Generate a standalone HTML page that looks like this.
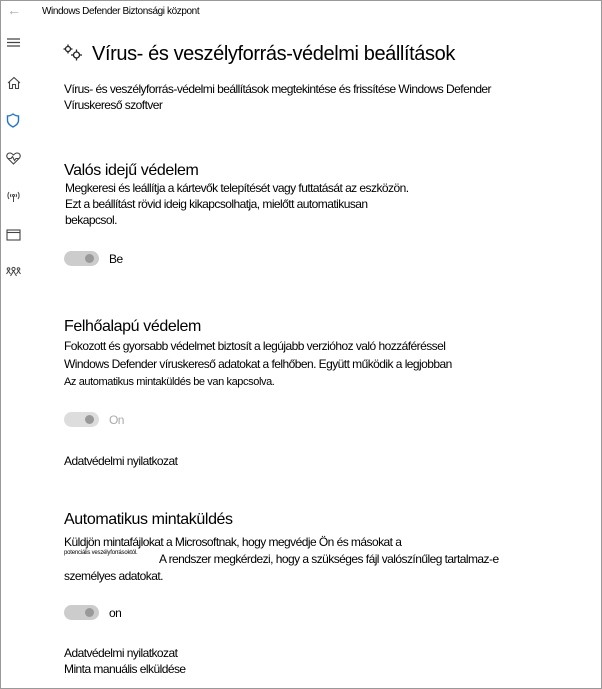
<!DOCTYPE html>
<html><head><meta charset="utf-8"><style>
*{margin:0;padding:0;box-sizing:border-box}
body{width:602px;height:689px;background:#fff;font-family:"Liberation Sans",sans-serif;color:#000;position:relative;overflow:hidden;border:1px solid #999}
.a{position:absolute;white-space:nowrap}
.t{font-size:12px;letter-spacing:-0.55px}
.h{font-size:16px;letter-spacing:-0.4px}
.tg{position:absolute;width:35px;height:15px;border-radius:8px;background:#ccc}
.tg:after{content:"";position:absolute;right:5px;top:3px;width:9px;height:9px;border-radius:50%;background:#999}
svg{position:absolute}
</style></head><body>
<div class="a" style="left:6px;top:1px;font-size:14px;color:#aaa">←</div>
<div class="a" style="left:41px;top:5px;font-size:10px;letter-spacing:-0.4px">Windows Defender Biztonsági központ</div>
<svg style="left:6px;top:37px" width="14" height="10"><path d="M0 1h13M0 4.5h13M0 8h13" stroke="#444" stroke-width="1.2"/></svg>
<svg style="left:6px;top:75px" width="14" height="14" fill="none" stroke="#444" stroke-width="1.1"><path d="M1 7L7 1.5 13 7M2.5 5.5V12.5H5.5V8.5H8.5V12.5H11.5V5.5"/></svg>
<svg style="left:5px;top:112px" width="14" height="15" fill="none" stroke="#1e73d0" stroke-width="1.4"><path d="M7 1C5 2.5 3 3 1.5 3V7.5C1.5 10.5 4 12.5 7 14 10 12.5 12.5 10.5 12.5 7.5V3C11 3 9 2.5 7 1Z"/></svg>
<svg style="left:5px;top:151px" width="15" height="13" fill="none" stroke="#444" stroke-width="1.1"><path d="M7.5 12L1.5 6C0 4 1 1 4 1 5.5 1 7 2.5 7.5 3 8 2.5 9.5 1 11 1 14 1 15 4 13.5 6Z M2 6.5H5L6.5 4.5 8.5 8.5 10 6.5H13"/></svg>
<svg style="left:5px;top:189px" width="15" height="13" fill="none" stroke="#444" stroke-width="1"><path d="M7.5 6V12M3 2C1.5 4 1.5 7 3 9M12 2C13.5 4 13.5 7 12 9M5 4C4.3 5 4.3 6 5 7M10 4C10.7 5 10.7 6 10 7"/><circle cx="7.5" cy="5.5" r="1"/></svg>
<svg style="left:5px;top:228px" width="15" height="12" fill="none" stroke="#444" stroke-width="1.1"><rect x="1" y="1" width="13" height="10"/><path d="M1 3.5H14"/></svg>
<svg style="left:5px;top:265px" width="15" height="12" fill="none" stroke="#444" stroke-width="1"><circle cx="7.5" cy="3" r="1.6"/><circle cx="2.5" cy="3" r="1.3"/><circle cx="12.5" cy="3" r="1.3"/><path d="M4.5 10L7.5 5 10.5 10M0.5 8L2.5 5 4.5 8M10.5 8L12.5 5 14.5 8"/></svg>
<svg style="left:62px;top:43px" width="20" height="17" fill="none" stroke="#222" stroke-width="1.3"><circle cx="5" cy="5" r="2.5"/><circle cx="13.5" cy="11" r="3"/><path d="M5 0.5V2M5 8V9.5M0.5 5H2M8 5H9.5M13.5 5.5V7.5M13.5 14.5V16.5M8 11H10M17 11H19"/></svg>
<div class="a" style="left:91px;top:42px;font-size:20px;letter-spacing:-0.4px">Vírus- és veszélyforrás-védelmi beállítások</div>
<div class="a t" style="left:63px;top:81px">Vírus- és veszélyforrás-védelmi beállítások megtekintése és frissítése Windows Defender</div>
<div class="a t" style="left:63px;top:97px">Víruskereső szoftver</div>
<div class="a h" style="left:63px;top:161px">Valós idejű védelem</div>
<div class="a t" style="left:64px;top:180px">Megkeresi és leállítja a kártevők telepítését vagy futtatását az eszközön.</div>
<div class="a t" style="left:64px;top:196px">Ezt a beállítást rövid ideig kikapcsolhatja, mielőtt automatikusan</div>
<div class="a t" style="left:64px;top:212px">bekapcsol.</div>
<div class="tg" style="left:63px;top:250px"></div>
<div class="a t" style="left:108px;top:251px">Be</div>
<div class="a h" style="left:63px;top:317px">Felhőalapú védelem</div>
<div class="a t" style="left:63px;top:338px">Fokozott és gyorsabb védelmet biztosít a legújabb verzióhoz való hozzáféréssel</div>
<div class="a t" style="left:63px;top:356px">Windows Defender víruskereső adatokat a felhőben. Együtt működik a legjobban</div>
<div class="a" style="left:63px;top:375px;font-size:11px;letter-spacing:-0.4px">Az automatikus mintaküldés be van kapcsolva.</div>
<div class="tg" style="left:63px;top:411px;background:#ddd"></div>
<div class="a t" style="left:108px;top:412px;color:#aaa">On</div>
<div class="a t" style="left:63px;top:453px">Adatvédelmi nyilatkozat</div>
<div class="a h" style="left:63px;top:510px">Automatikus mintaküldés</div>
<div class="a t" style="left:63px;top:534px">Küldjön mintafájlokat a Microsoftnak, hogy megvédje Ön és másokat a</div>
<div class="a" style="left:63px;top:549px;font-size:6px;letter-spacing:-0.2px">potenciális veszélyforrásoktól.</div>
<div class="a t" style="left:158px;top:551px">A rendszer megkérdezi, hogy a szükséges fájl valószínűleg tartalmaz-e</div>
<div class="a t" style="left:63px;top:568px">személyes adatokat.</div>
<div class="tg" style="left:63px;top:604px"></div>
<div class="a t" style="left:108px;top:605px">on</div>
<div class="a t" style="left:63px;top:645px">Adatvédelmi nyilatkozat</div>
<div class="a t" style="left:63px;top:661px">Minta manuális elküldése</div>
</body></html>
